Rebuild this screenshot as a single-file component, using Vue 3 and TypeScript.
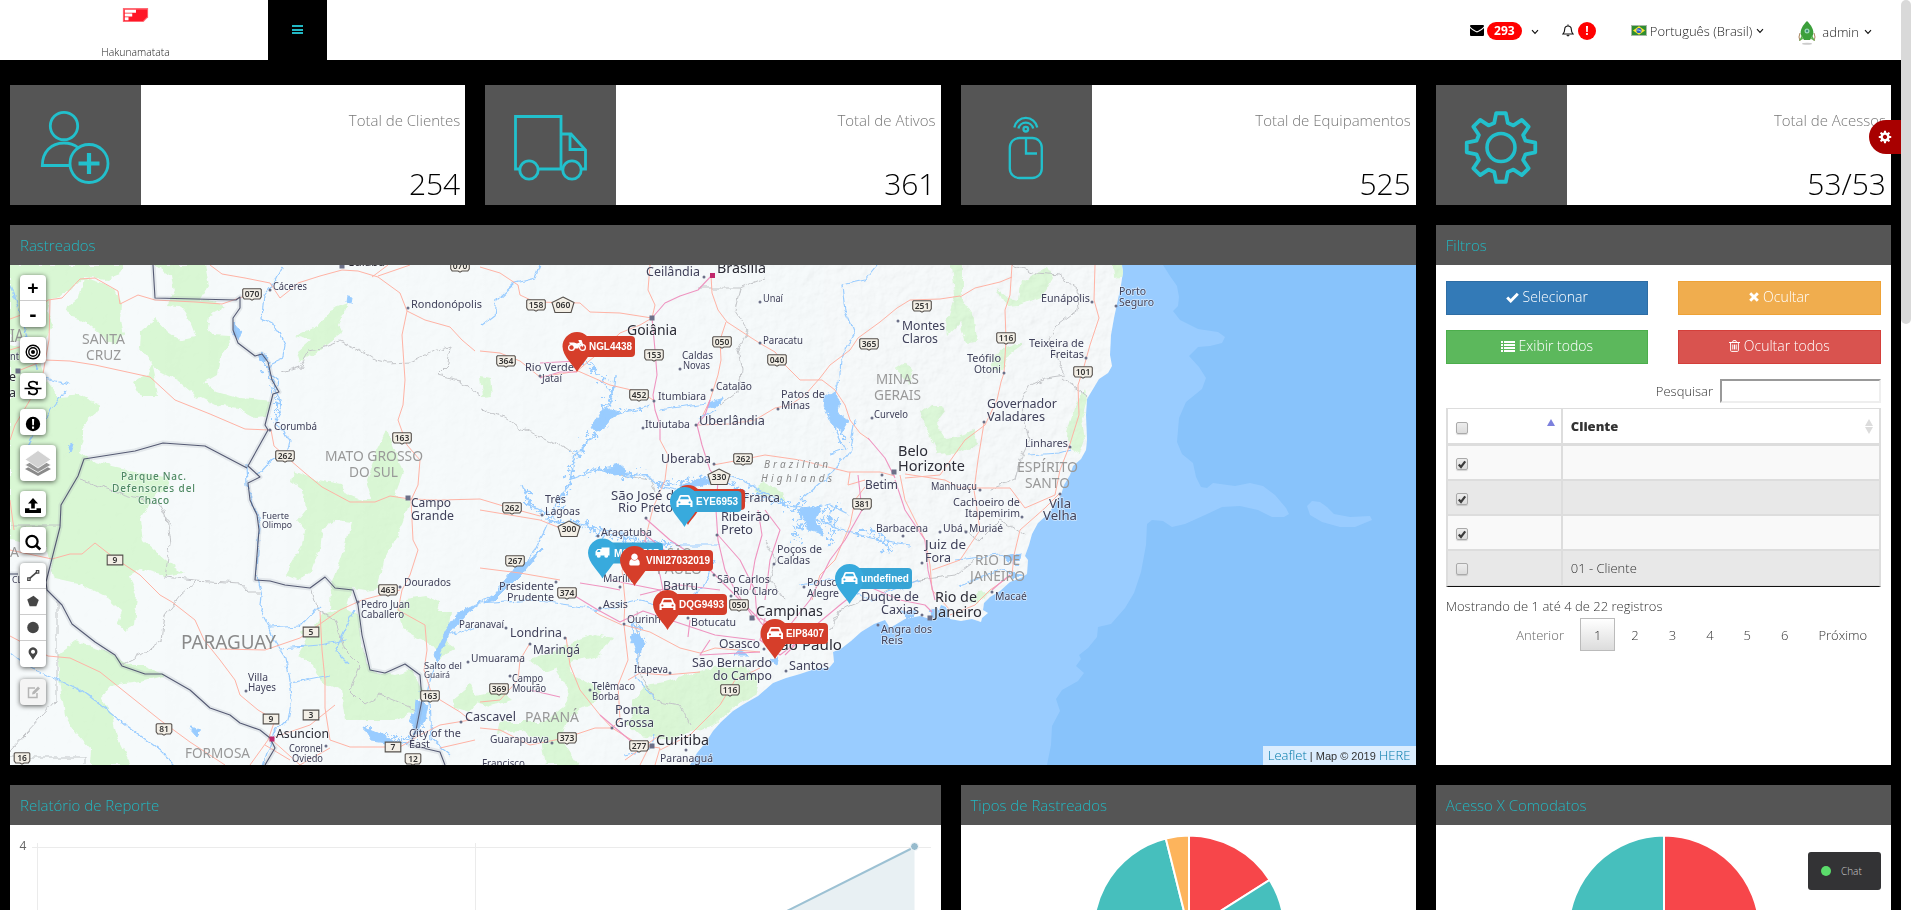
<script setup lang="ts">
interface Card { icon: 'user' | 'truck' | 'mouse' | 'gear'; label: string; value: string }
type Label = [text: string, x: number, y: number, size: number, width: number, kind?: string]
type Shield = [text: string, x: number, y: number, kind?: 'pent' | 'plain']
interface Marker { x: number; top: number; right: number; text: string; tx: number; tw: number; color: 'red' | 'blue'; icon: 'moto' | 'car' | 'truck' | 'user' }

const cards: Card[] = [
  { icon: 'user', label: 'Total de Clientes', value: '254' },
  { icon: 'truck', label: 'Total de Ativos', value: '361' },
  { icon: 'mouse', label: 'Total de Equipamentos', value: '525' },
  { icon: 'gear', label: 'Total de Acessos', value: '53/53' },
]

const rows = [
  { checked: true, name: '' },
  { checked: true, name: '' },
  { checked: true, name: '' },
  { checked: false, name: '01 - Cliente' },
]
const pages = [1, 2, 3, 4, 5, 6]

function gearPath(cx: number, cy: number, outer: number, inner: number, top: number, base: number): string {
  const pts: string[] = []
  for (let i = 0; i < 8; i++) {
    const steps: [number, number][] = [[-base, inner], [-top, outer], [top, outer], [base, inner]]
    for (const [a, r] of steps) {
      const t = ((i * 45 + a - 90) * Math.PI) / 180
      pts.push(`${(cx + r * Math.cos(t)).toFixed(2)},${(cy + r * Math.sin(t)).toFixed(2)}`)
    }
  }
  return 'M' + pts.join('L') + 'Z'
}
const gear = gearPath(65, 62.5, 34.6, 25.4, 8, 15.5)
const cog = gearPath(7, 7, 6.3, 4.6, 9, 14)

const deep = 'M1163,265L1170,276 1177,286 1179,297 1178,306 1173,311 1180,320 1198,329 1218,332 1225,337 1222,343 1210,346 1198,347 1189,356 1199,367 1206,378 1202,389 1186,402 1179,418 1177,442 1182,454 1193,463 1196,477 1201,487 1207,488 1213,483 1235,486 1250,483 1263,486 1275,495 1286,508 1289,514 1284,517 1272,517 1258,510 1240,506 1222,507 1205,515 1185,524 1172,527 1163,521 1152,520 1147,524 1146,545 1141,572 1134,593 1125,608 1111,624 1098,627 1097,637 1088,648 1079,655 1081,659 1076,666 1084,673 1078,681 1062,690 1056,699 1060,711 1052,726 1051,745 1047,765H1416V265Z'
const shoal = 'M1307,506L1312,501 1320,502 1327,507 1334,514 1350,517 1370,516 1372,520 1355,527 1340,527 1322,522 1310,515Z'
const land = 'M10,265H1122L1123,272 1121,285 1118,299 1114,318 1111,335 1110,355 1112,366 1108,373 1099,379 1093,389 1087,399 1086,415 1087,440 1086,450 1081,459 1073,466 1070,475 1064,485 1061,495 1055,504 1048,514 1038,523 1032,534 1029,545 1025,556 1028,560 1027,574 1021,578 1010,582 1000,591 990,597 984,603 983,610 988,613 982,618 981,622 972,619 961,621 950,619 946,607 941,605 936,618 930,619 920,616 905,619 890,628 885,620 874,624 861,632 851,641 842,648 833,652 834,662 829,668 818,668 800,674 786,678 773,683 758,696 744,704 733,711 721,722 713,731 706,742 697,753 690,765H10Z'
const parks = [
  'M10,265H124L121,274 105,280 84,277 72,288 60,297 50,299 46,312 52,325 42,345 10,340Z',
  'M83,278L100,283 116,290 121,305 120,320 123,335 118,345 108,342 98,332 86,322 72,318 65,308 78,298Z',
  'M155,265H205L209,285 200,300 214,301 224,308 210,315 208,328 213,335 228,336 229,345 220,358 217,375 205,382 216,391 240,398 263,400 272,401 267,416 255,417 238,408 215,405 195,395 178,381 160,372 152,366 156,385 158,397 141,397 133,383 146,374 152,362 140,347 141,331 156,319 168,332 182,341 196,338 189,320 180,307 168,306 175,290 172,277Z',
  'M10,345L35,352 46,380 60,397 80,395 100,405 97,412 82,424 84,435 79,452 95,462 130,470 168,478 170,487 152,498 140,520 143,540 165,560 184,573 165,576 140,569 130,575 137,596 134,625 126,630 118,623 122,610 108,598 82,585 55,579 46,548 10,540Z',
  'M297,336L318,325 330,310 348,303 338,325 342,334 320,350 300,362 297,352 311,340Z',
  'M293,471L313,479 340,484 347,494 362,500 372,500 366,480 377,450 387,430 396,452 403,473 395,495 410,500 404,522 393,545 383,560 378,588 366,590 352,588 346,610 330,610 331,585 345,545 352,522 336,520 323,528 320,550 312,572 298,580 285,575 303,545 305,530 297,520 305,510 303,490 291,482Z',
  'M323,615L345,608 359,616 363,650 370,670 395,675 414,670 423,690 412,714 395,720 345,720 341,690 322,682 313,665 298,655 306,640 300,632 315,625Z',
  'M400,600L425,596 440,602 438,612 452,612 448,640 455,650 440,657 428,643 405,630 398,612Z',
  'M57,655L75,641 104,650 130,664 142,664 168,675 140,682 110,686 101,697 112,715 118,740 130,765H91L92,750 76,732 65,715 62,695Z',
  'M530,660L552,652 565,645 596,634 612,638 600,655 570,662 572,675 600,690 596,702 570,715 562,740 578,765H545L541,740 520,730 497,733 500,722 543,722 566,705 569,690 556,668 545,672Z',
  'M632,700L645,685 665,682 710,668 745,666 760,680 755,696 735,706 715,725 690,732 672,740 640,735 626,722 632,715Z',
  'M475,695L500,690 512,700 490,706 475,702Z',
  'M452,700L470,685 478,700 470,712 455,708Z',
  'M920,412L930,404 941,404 945,412 936,424 945,438 960,436 975,430 978,444 960,452 938,454 928,430Z',
  'M952,265H962V300L974,318 976,342 966,343 960,322 948,335 946,322 955,295Z',
  'M997,288L1009,298 1018,300 1020,283 1030,275 1048,267 1054,278 1044,296 1020,305 1005,306Z',
  'M1085,390L1088,400 1082,420 1085,440 1080,454 1070,448 1067,432 1075,405Z',
  'M988,370L1000,350 1022,342 1022,346 1005,358 1003,372Z',
  'M1112,265H1122V277L1113,278Z',
  'M480,376L491,378 493,396 482,397Z',
  'M895,368L905,361 913,372 908,384Z',
  'M755,490L765,483 782,492 784,500 768,497Z',
  'M980,592L990,590 978,602 968,600Z',
]
const roads = [
  'M10,319L35,310 48,300 62,298 80,279 95,278 118,291 120,304 138,295 155,300 195,302 222,304 245,296',
  'M50,300L49,340 45,362 42,380 15,425 10,440',
  'M10,350L42,340M18,371L45,360 70,361 95,365 150,377 175,400 210,414 245,429 270,430',
  'M210,265L222,274 245,278 270,283 280,298 290,290 298,283 320,276 342,270 358,271 378,277 400,293 407,311',
  'M372,277L388,265M378,276L410,265',
  'M407,311L425,320 450,327 462,340 475,351',
  'M407,311L402,335 405,380 403,405 398,420 407,445 420,460 418,485 411,500 413,540 418,550 410,575 402,590 398,610 425,625 427,650 424,670 432,695 460,712 470,720',
  'M271,430L274,446 290,460 305,473 322,487 350,502 375,502 390,496 410,499 440,500 480,499 510,508 540,516',
  'M10,500L14,530M10,550L52,559 70,554 82,554 95,543 113,557 140,575 160,595 172,602 195,620 204,640 220,660 235,680 240,695 258,710 275,720 268,740 250,765',
  'M10,636L48,656 70,658 100,672 160,720 190,742 225,765',
  'M220,649L265,650 300,638 340,610 362,600 400,590M320,612L322,650 325,680 325,708 330,740 350,747 400,747 420,735 440,725 470,720M275,737L310,725 335,705',
  'M272,740L300,765 330,748M265,745L290,760M440,748L475,740',
  'M480,267L500,273 518,285 520,295 535,302 580,303 590,312 620,313 652,318',
  'M652,318L655,305 648,290 650,265M652,318L640,325 620,333 600,352 577,371M480,351L500,353 520,361 540,377 578,371 610,385 640,392 655,401',
  'M660,440L668,455 665,480 653,508 645,540 622,570 625,600 624,622',
  'M711,275L712,293 718,310 727,322 750,337 761,344 775,352 785,365 800,380 822,380 835,390 845,405 850,420 860,433 870,440',
  'M726,322L720,340 721,360 718,375 710,400 703,415M697,425L730,424 755,420 775,408 790,405 805,395 820,378 830,365 850,350 858,338 880,322 897,308 910,300 940,299 960,296',
  'M713,465L740,460 765,455 800,460 848,472 880,472 895,476M850,472L848,485 865,480M905,478L940,475 965,440 985,425 997,400 1001,382 1004,373 1006,340 1005,310 1010,295 1012,265',
  'M960,297L975,288 1000,282 1012,277M1095,265L1094,300 1099,318 1090,345 1083,370 1078,385 1079,415 1069,447 1060,470 1055,495 1025,508 1010,488 960,488 945,480 905,474',
  'M984,423L978,460 974,490 980,530 960,560 932,570M1060,493L1045,508 1020,530 1014,555 1012,575 990,590 975,605 950,615',
  'M865,487L855,500 850,525 835,560 820,575 812,600M900,475L905,500 925,540 930,565 932,590 950,610',
  'M624,625L650,632 680,648 700,653 715,648 760,652M622,625L600,615 595,612M624,625L628,660 618,685 620,720 612,728 640,745 660,748',
  'M566,637L570,665 580,690 600,715 612,728 595,728 565,738 530,745 500,730 480,728M530,643L520,660 518,680 500,700 480,702',
  'M660,750L690,735 720,705 735,680 760,668M628,680L640,673 665,675 700,672M660,748L655,765M640,765L650,745M625,760L660,735',
  'M480,510L540,520 565,530M480,568L520,573 560,580',
]
const highways = [
  'M652,318L665,303 680,296 698,290 712,275M652,318L655,350 657,375 653,395 655,410 660,425 660,440',
  'M710,400L705,415 697,425 702,445 710,470 718,480 716,510 718,540 725,570 735,590 755,620',
  'M540,363L577,361M540,378L560,372 577,372M868,438L885,458 895,478',
  'M565,590L598,610 620,622 643,611 670,620 715,635 755,640M645,540L660,575 665,600M667,620L660,590 610,580',
  'M718,535L740,560 755,590 757,618 780,645M750,590L755,560 762,535 758,510M645,518L670,540 700,560 720,580 760,620M760,618L800,640 780,655 760,640 765,618',
  'M785,655L810,630 840,605 865,585 900,600 925,605 932,612M858,475L862,510 845,540 830,560 810,600 790,625 775,640M710,640L700,655 760,652M620,590L605,587 580,583',
  'M895,480L905,510 925,540 928,570 935,600M1010,575L1000,583 992,590M560,697L530,690M600,715L632,742M670,555L640,530',
  'M765,600L770,560 780,530 765,510M640,595L680,585 720,590M690,620L688,637',
]
const rivers = [
  'M282,265L275,280 264,295 262,318 275,325 285,345 283,358 272,363 268,372 278,380 275,392 280,400 282,412 275,425 285,430 290,440 288,450 270,462 258,475',
  'M246,465L247,485 255,510 260,530 258,550 257,575 262,595 260,610 268,625 275,640 285,655 290,680 292,700 288,720 275,732 268,750 263,765',
  'M540,265L535,278 515,283 497,300 495,315 482,325M877,265L865,280 842,285 845,310 855,335 840,360 838,385 830,400 835,430 845,450 830,455',
  'M650,405L630,412 605,418 590,440 575,455 570,485 560,495 545,530 535,550 515,575 500,590 470,610 445,632 438,660 430,680 425,700 422,725 410,740',
  'M570,480L600,468 625,475 645,475 655,485 675,490 700,480 730,475 760,490 785,505 810,510 830,505 850,515',
  'M545,520L580,525 610,530 640,540 680,545 720,545M480,604L530,600 570,605 600,610 640,600 680,610 700,590 715,560',
  'M10,652L30,668 60,680 80,690 100,705 130,728 160,750 175,765M10,285L20,315 30,345 38,370M70,385L45,378M65,390L30,440 20,470',
  'M270,628L300,626 320,605M280,648L320,645 345,640M290,683L330,675M355,610L340,640 335,650 350,665',
  'M480,625L450,635M1028,455L1060,453 1070,450M955,560L1000,555 1020,565M960,585L1000,570 1020,577M800,510L840,530 880,540 910,545',
  'M615,375L613,395 605,415M700,420L716,410M660,410L705,403M522,485L530,505 548,515M855,420L850,450 835,470 800,500',
  'M623,755L650,750 655,735M430,700L432,740 450,755M630,620L640,650 635,675 655,700M800,585L835,580 870,600 920,580',
]
const reservoirs = [
  'M577,350C582,360 608,380 612,396L603,414 640,408M605,416L592,436 572,462 568,490 552,515',
  'M582,474L600,468 628,476 648,474M655,485L685,482 720,478 745,492 775,500 800,512 840,508',
  'M548,520L580,524 598,532 640,542 672,545M524,488L530,505 546,515',
  'M796,528L835,518 830,545M858,530L880,536 890,550M802,500L795,540',
  'M425,690L422,715 418,735M365,730L395,738 412,742M828,395L836,425 845,440',
  'M262,355L270,375 278,400 276,420M635,620L640,640',
]
const lakes = [
  'M234,322L241,330 237,340 233,335ZM258,353L268,356 265,362 260,360ZM348,296L353,297 352,303 347,302Z',
  'M824,398L833,391 840,400 838,412 849,420 842,432 832,424 826,411 823,406Z',
  'M602,411L612,410 622,414 610,418 600,430 592,428Z',
  'M604,468L620,465 630,473 615,475ZM679,485L700,479 709,485 690,488Z',
  'M708,402L724,397 718,405 706,408Z',
  'M535,555L542,548 520,575 495,600 485,604 510,573ZM480,602L468,612 450,633 438,660 434,655 446,630 460,612Z',
  'M365,728L378,733 390,740 400,748 385,742 372,740ZM415,700L428,705 425,720 416,732 410,722 414,712Z',
  'M630,635L640,633 645,645 637,653ZM68,446L73,443 70,453ZM190,727L200,730 197,735Z',
  'M800,510L822,505 815,520 824,535 808,530ZM1003,556L1021,553 1020,560 1008,562ZM1012,572L1022,574 1014,579Z',
  'M929,612L938,606 942,618 934,618ZM900,611L915,612 908,619Z',
  'M768,660L778,657 776,665ZM740,651L748,655 735,655Z',
]
const stateLines = [
  'M282,373L300,367 310,350 325,347 340,341 360,350 375,360 388,363 410,362 430,353 450,345 448,365 438,375 460,380 480,395',
  'M480,410L505,418 520,428 545,438 565,448 575,455M698,288H740L765,278M740,288L735,310 748,330 738,350 742,370 740,390 720,405',
  'M165,510L170,545 165,577 195,580 240,583 248,592 260,592M196,581L180,595 165,615 162,640 140,655 120,665M80,480L110,490 160,505 170,525',
  'M1012,265L1035,273 1060,275 1078,290 1080,308 1060,323 1048,340 1055,355 1065,375 1045,378 1030,385 1022,400 1023,415 1030,440 1020,460 1015,480 990,490',
  'M1062,378L1088,397M620,475L650,480 655,490M765,540L775,560 770,580 785,600M635,610L640,640 638,670 655,700 680,705 690,725',
  'M57,600V700L10,750M10,757H85V765M10,525H60M312,590L318,610 335,620 345,650 360,665 350,690 365,705 380,695 415,710',
  'M1025,535L1000,520 980,540 965,530M975,560L955,575 920,580 890,590 840,610 830,630 800,640',
]
const borders = [
  'M153,265L155,298 236,300 240,297 240,308 233,318 233,330 238,343 255,356 262,354 268,362 272,380 279,392 273,394 265,425 268,430 248,466 260,477 248,483 250,500 257,515 259,530 255,580 270,581 285,585 310,588 325,577 335,588 353,590 358,605 362,635 370,670 385,673 405,664 420,675 422,700 416,730 410,745 440,752 445,765',
  'M247,468L205,446 163,443 135,451 84,459 78,476 61,505 60,527 46,582 47,590 62,605 72,624 95,642 115,655 122,666 145,674 162,674 190,690 210,708 230,715 240,723 260,730 270,738 275,748 265,765',
  'M10,574H18',
]

const labels: Label[] = [
  ['Cuiabá', 347, 266, 13, 38, 'city'], ['Cáceres', 273, 290, 10.5, 34], ['Rondonópolis', 411, 308, 11, 71], ['SANTA', 82, 344, 15, 43, 'state'], ['CRUZ', 86, 360, 15, 35, 'state'],
  ['Corumbá', 274, 430, 11, 43], ['MATO GROSSO', 325, 461, 15, 98, 'state'], ['DO SUL', 349, 477, 15, 49, 'state'],
  ['Parque Nac.', 121, 480, 10, 65, 'park'], ['Defensores del', 112, 492, 10, 83, 'park'], ['Chaco', 138, 504, 10, 31, 'park'],
  ['Campo', 411, 507, 13, 40], ['Grande', 411, 520, 13, 43], ['Fuerte', 262, 519, 9.5, 27], ['Olimpo', 262, 528, 9.5, 30],
  ['IA', 10, 342, 18, 14, 'state'], ['nt', 10, 360, 10.5, 9], ['e', 9, 381, 13, 7, 'city'], ['a', 9, 397, 13, 7, 'city'], ['A', 10, 557, 14, 9, 'state'], ['CL', 12, 583, 9.5, 10],
  ['PARAGUAY', 181, 649, 19, 95, 'country'], ['Dourados', 404, 586, 11.5, 47], ['Pedro Juan', 361, 608, 10, 49], ['Caballero', 361, 618, 10, 43],
  ['Villa', 248, 681, 10, 20], ['Hayes', 248, 691, 10, 28], ['Salto del', 424, 669, 9.5, 38], ['Guairá', 424, 678, 9.5, 26], ['Asuncion', 276, 738, 13, 53, 'city'],
  ['Coronel', 289, 752, 10, 34], ['Oviedo', 292, 762, 10, 31], ['City of the', 409, 737, 11, 52], ['East', 409, 748, 11, 21], ['FORMOSA', 185, 758, 14, 65, 'state'],
  ['Cascavel', 465, 721, 12.5, 51], ['Paranavaí', 459, 628, 10.5, 45], ['Umuarama', 471, 662, 11, 54],
  ['Ceilândia', 646, 276, 12, 54], ['Brasília', 717, 273, 14.5, 49, 'city'], ['Unaí', 763, 302, 10, 20], ['Goiânia', 627, 335, 15, 50, 'city'],
  ['Rio Verde', 525, 371, 11, 49], ['Jataí', 542, 382, 10.5, 20], ['Caldas', 682, 359, 10, 31], ['Novas', 683, 369, 10, 27], ['Paracatu', 763, 344, 10.5, 40],
  ['Catalão', 716, 390, 11, 36], ['Itumbiara', 658, 400, 11, 48], ['Patos de', 781, 398, 11, 44], ['Minas', 781, 409, 11, 29], ['Uberlândia', 699, 425, 13, 66],
  ['Ituiutaba', 645, 428, 11, 45], ['Uberaba', 661, 463, 12.5, 50], ['Montes', 902, 330, 13, 43], ['Claros', 902, 343, 13, 36], ['MINAS', 876, 384, 15, 43, 'state'], ['GERAIS', 874, 400, 15, 47, 'state'],
  ['Curvelo', 874, 418, 10, 34], ['Brazilian', 764, 468, 10, 64, 'range'], ['Highlands', 761, 482, 10, 71, 'range'], ['Belo', 898, 456, 15, 30, 'city'], ['Horizonte', 898, 471, 15, 67, 'city'],
  ['Betim', 865, 489, 12, 33], ['Manhuaçu', 931, 490, 10.5, 46], ['Três', 545, 503, 11, 21], ['Lagoas', 545, 515, 11, 35], ['São José do', 611, 500, 12.5, 71], ['Rio Preto', 618, 512, 12.5, 55],
  ['Franca', 743, 502, 12, 37], ['Ribeirão', 721, 521, 12.5, 49], ['Preto', 721, 534, 12.5, 32],
  ['Eunápolis', 1041, 302, 11, 49], ['Porto', 1119, 295, 11, 27], ['Seguro', 1119, 306, 11, 35], ['Teixeira de', 1029, 347, 11, 55], ['Freitas', 1050, 358, 11, 34],
  ['Teófilo', 967, 362, 11, 34], ['Otoni', 974, 373, 11, 27], ['Governador', 987, 408, 13, 70], ['Valadares', 987, 421, 13, 58], ['Linhares', 1025, 447, 11, 43],
  ['ESPÍRITO', 1017, 472, 15, 61, 'state'], ['SANTO', 1025, 488, 15, 45, 'state'], ['Cachoeiro de', 953, 506, 11, 67], ['Itapemirim', 965, 517, 11, 55], ['Vila', 1049, 508, 13, 22], ['Velha', 1043, 520, 13, 34],
  ['Araçatuba', 601, 536, 11, 51], ['SÃO', 667, 558, 15, 25, 'state'], ['PAULO', 657, 574, 15, 45, 'state'], ['Marília', 603, 582, 11, 33], ['Presidente', 499, 590, 11, 55], ['Prudente', 507, 601, 11, 47],
  ['Bauru', 663, 590, 13, 35], ['São Carlos', 717, 583, 11, 53], ['Rio Claro', 733, 595, 11, 45], ['Assis', 603, 608, 11, 25], ['Ourinhos', 627, 623, 11, 45], ['Botucatu', 691, 626, 11, 45],
  ['Campinas', 756, 616, 14, 67, 'city'], ['Poços de', 777, 553, 11, 45], ['Caldas', 777, 564, 11, 33], ['Pouso', 807, 586, 11, 31], ['Alegre', 807, 597, 11, 32],
  ['Duque de', 861, 601, 13, 58], ['Caxias', 881, 614, 13, 38], ['Rio de', 935, 602, 14.5, 42, 'city'], ['Janeiro', 934, 617, 14.5, 48, 'city'], ['Angra dos', 881, 633, 11, 51], ['Reis', 881, 644, 11, 22],
  ['Londrina', 510, 637, 13, 52], ['Maringá', 533, 654, 13, 47], ['Osasco', 719, 648, 13, 41], ['São Paulo', 772, 650, 14.5, 70, 'city'], ['São Bernardo', 692, 667, 12.5, 80], ['do Campo', 713, 680, 12.5, 59],
  ['Santos', 789, 670, 12.5, 40], ['Itapeva', 634, 673, 10.5, 34], ['Campo', 512, 682, 10, 31], ['Mourão', 512, 692, 10, 34], ['Telêmaco', 592, 690, 10.5, 43], ['Borba', 592, 700, 10.5, 27],
  ['Ponta', 615, 714, 12.5, 35], ['Grossa', 615, 727, 12.5, 39], ['PARANÁ', 525, 722, 14, 54, 'state'], ['Guarapuava', 490, 743, 11, 59], ['Curitiba', 656, 745, 14.5, 53, 'city'], ['Paranaguá', 660, 762, 11, 53], ['Francisco', 482, 767, 10.5, 43],
  ['Barbacena', 876, 532, 11, 52], ['Ubá', 943, 532, 11, 20], ['Muriaé', 969, 532, 11, 34], ['Juiz de', 925, 549, 12.5, 41], ['Fora', 925, 562, 12.5, 26], ['RIO DE', 975, 565, 15, 45, 'state'], ['JANEIRO', 970, 581, 15, 55, 'state'], ['Macaé', 995, 600, 11, 32],
]
const shields: Shield[] = [
  ['9', 115, 560, 'plain'], ['9', 271, 719, 'plain'], ['5', 311, 632, 'plain'], ['3', 311, 715, 'plain'], ['7', 393, 747, 'plain'], ['81', 164, 729], ['16', 22, 758], ['12', 413, 759], ['163', 430, 696], ['463', 388, 590],
  ['262', 285, 456], ['163', 402, 438], ['070', 252, 294], ['070', 460, 266], ['158', 536, 305], ['060', 563, 305, 'pent'], ['153', 654, 355], ['050', 722, 342], ['364', 506, 361], ['452', 639, 395], ['262', 743, 459],
  ['330', 719, 477, 'pent'], ['040', 777, 360], ['251', 922, 306], ['365', 869, 344], ['381', 862, 504], ['262', 512, 508], ['116', 1006, 338], ['101', 1083, 372], ['300', 569, 529, 'pent'], ['267', 515, 561], ['374', 567, 593],
  ['050', 739, 605], ['116', 730, 690], ['369', 499, 689], ['373', 567, 738], ['277', 639, 746],
]
const dots: [number, number][] = [[270, 290], [408, 308], [270, 430], [400, 587], [358, 602], [246, 691], [326, 746], [704, 277], [760, 302], [540, 376], [760, 343], [680, 369], [712, 390], [654, 401], [778, 409], [696, 425], [643, 428], [714, 464], [898, 321], [872, 418], [882, 475], [980, 490], [542, 515], [646, 518], [717, 535], [598, 536], [556, 582], [620, 587], [714, 575], [731, 596], [600, 608], [624, 624], [688, 618], [774, 564], [804, 587], [1092, 302], [1116, 306], [1086, 358], [1004, 373], [984, 422], [1070, 447], [1022, 517], [1060, 494], [903, 536], [940, 532], [966, 532], [922, 563], [992, 592], [878, 625], [565, 638], [530, 644], [764, 649], [786, 671], [670, 673], [510, 676], [590, 690], [612, 728], [552, 743], [686, 750], [922, 615], [461, 722], [468, 662], [506, 628]]
const squares: [number, number][] = [[342, 266], [652, 318], [894, 472], [752, 618], [930, 618], [652, 746], [408, 498], [18, 371]]

const markers: Marker[] = [
  { x: 577, top: 332, right: 635, text: 'NGL4438', tx: 589, tw: 43, color: 'red', icon: 'moto' },
  { x: 688, top: 485, right: 745, text: '', tx: 0, tw: 0, color: 'red', icon: 'car' },
  { x: 684.5, top: 487, right: 741.5, text: 'EYE6953', tx: 696, tw: 42, color: 'blue', icon: 'car' },
  { x: 602.5, top: 538.5, right: 663, text: 'MSE6587', tx: 614, tw: 45, color: 'blue', icon: 'truck' },
  { x: 634.5, top: 546, right: 713, text: 'VINI27032019', tx: 646, tw: 64, color: 'red', icon: 'user' },
  { x: 667.5, top: 590, right: 727, text: 'DQG9493', tx: 679, tw: 45, color: 'red', icon: 'car' },
  { x: 775, top: 619, right: 828, text: 'EIP8407', tx: 786, tw: 38, color: 'red', icon: 'car' },
  { x: 849.5, top: 564, right: 912, text: 'undefined', tx: 861, tw: 48, color: 'blue', icon: 'car' },
]
const shieldPath = (s: Shield): string => {
  if (s[3] === 'pent') return 'M0,-8L11,-2.5 8,7.5H-8L-11,-2.5Z'
  const w = s[0].length === 3 ? 9.3 : 7.8
  return s[3] === 'plain' ? 'M-7.8,-4.9H7.8V4.9H-7.8Z' : `M-${w},-4.3L-${w - 0.8},-5.2H${w - 0.8}L${w},-4.3V2.8L${w - 1.5},5H2L0,6.2 -2,5H-${w - 1.5}L-${w},2.8Z`
}
</script>

<template>
  <div class="page">
    <div class="main">
      <header class="topbar">
        <div class="brand">
          <svg class="brand-logo" viewBox="0 0 27 15"><path d="M0 0H27V10L22 15H0Z" fill="#ff6b75" /><path d="M1 1.5H26V9.5L21.5 14H1Z" fill="#ff1626" /><path d="M2 2H14V5H2ZM2 6H10V9H2ZM2 10H6V13H2Z" fill="#fff" /></svg>
          <span class="brand-name">Hakunamatata</span>
        </div>
        <div class="menu-toggle"><i></i><i></i><i></i></div>
        <nav class="user-nav">
          <div class="nav-mail">
            <svg width="14" height="11" viewBox="0 0 14 11"><path d="M1 0H13Q14 0 14 1.2C13 3.2 9 5.4 7 6.3C5 5.4 1 3.2 0 1.2Q0 0 1 0ZM0 3C2 5 5 6.6 7 7.5C9 6.6 12 5 14 3V10Q14 11 13 11H1Q0 11 0 10Z" /></svg>
            <span class="badge">293</span>
            <svg class="chev" viewBox="0 0 8 6"><path d="M1 1.2L4 4.4 7 1.2" /></svg>
          </div>
          <div class="nav-bell">
            <svg width="12" height="13" viewBox="0 0 12 13"><path d="M1 10C2.6 8.5 2.6 7.5 2.7 5.2C2.8 3.3 4 2 6 2S9.2 3.3 9.3 5.2C9.4 7.5 9.4 8.5 11 10ZM6 .5V2M4.8 11Q6 12.8 7.2 11" fill="none" stroke="#111" stroke-width="1.1" /></svg>
            <span class="badge round">!</span>
          </div>
          <div class="nav-lang">
            <svg class="flag" width="16" height="11" viewBox="0 0 16 11"><path d="M0 0H16V11H0Z" fill="#a7b9a7" /><path d="M1 1H15V10H1Z" fill="#2f8d32" /><path d="M8 1.3L14 5.5 8 9.7 2 5.5Z" fill="#ffe62e" /><circle cx="8" cy="5.5" r="2.6" fill="#2a5fc4" /><path d="M5.6 5Q8 4.4 10.3 6.4" stroke="#cfe3f7" stroke-width=".8" fill="none" /></svg>
            <span>Português (Brasil)</span>
            <svg class="chev" viewBox="0 0 8 6"><path d="M1 1.2L4 4.4 7 1.2" /></svg>
          </div>
          <div class="nav-user">
            <svg width="18" height="24" viewBox="0 0 18 24"><path d="M2 12Q0 16 2 20M16 12Q18 16 16 20" stroke="#a8835c" fill="none" /><path d="M9 0C13 4 16.5 9 15 14L12 19H6L3 14C1.5 9 5 4 9 0Z" fill="#3c9f3b" /><path d="M4 14L1 20 5 18ZM14 14L17 20 13 18Z" fill="#58b04a" /><circle cx="9" cy="10" r="2.5" fill="#9ad8b5" /><circle cx="9" cy="10" r="1.2" fill="#3d8f77" /><ellipse cx="9" cy="22.8" rx="5" ry="1" fill="#ccc" /></svg>
            <span>admin</span>
            <svg class="chev" viewBox="0 0 8 6"><path d="M1 1.2L4 4.4 7 1.2" /></svg>
          </div>
        </nav>
      </header>

      <section class="cards">
        <article v-for="c in cards" :key="c.label" class="card">
          <div class="card-icon">
            <svg v-if="c.icon === 'user'" viewBox="0 0 131 120"><circle cx="54" cy="41" r="13.7" /><path d="M59.5 80.5H32.3C32.3 67 41 58 54 58Q62 58 68 62.5" /><circle cx="79" cy="78.5" r="19" /><path d="M79 68V89M68.5 78.5H89.5" stroke-width="4.2" /></svg>
            <svg v-else-if="c.icon === 'truck'" viewBox="0 0 131 120"><path d="M34 84H30.5V31.5H76V84M53 84H78M76 49H86L100.5 65V84H96M85 50V64.5H100" /><circle cx="44" cy="85" r="9.2" /><circle cx="87" cy="85" r="9.2" /></svg>
            <svg v-else-if="c.icon === 'mouse'" viewBox="0 0 131 120"><rect x="48.800" y="53" width="32" height="40" rx="9.5" stroke-width="2.300" /><path d="M65 53V68.5H76M57.4 43.5A7.6 7.6 0 0 1 72.2 43.5M53.3 42.5A11.7 11.7 0 0 1 76.3 42.5" stroke-width="2.300" /><circle cx="64.800" cy="44.2" r="2.3" stroke-width="2.300" /></svg>
            <svg v-else viewBox="0 0 131 120"><path :d="gear" stroke-width="3.8" stroke-linejoin="round" /><circle cx="65" cy="62.5" r="14" stroke-width="3.6" /></svg>
          </div>
          <div class="card-body">
            <span class="card-label">{{ c.label }}</span>
            <span class="card-value">{{ c.value }}</span>
          </div>
        </article>
      </section>

      <section class="row mid">
        <article class="panel wide">
          <h3 class="panel-head">Rastreados</h3>
          <div class="map">
            <svg class="map-canvas" width="1406" height="500" viewBox="10 265 1406 500">
              <defs>
                <clipPath id="land-clip"><path :d="land" /></clipPath>
                <filter id="relief" x="0" y="0" width="100%" height="100%">
                  <feTurbulence type="fractalNoise" baseFrequency="0.09" numOctaves="4" seed="4" result="n" />
                  <feDiffuseLighting in="n" surfaceScale="2.4" lighting-color="#ffffff"><feDistantLight azimuth="225" elevation="55" /></feDiffuseLighting>
                </filter>
                <filter id="rough" x="-2%" y="-2%" width="104%" height="104%">
                  <feTurbulence type="fractalNoise" baseFrequency="0.09" numOctaves="3" seed="9" />
                  <feDisplacementMap in="SourceGraphic" scale="7" xChannelSelector="R" yChannelSelector="G" />
                </filter>
                <filter id="jagged" x="-5%" y="-5%" width="110%" height="110%">
                  <feTurbulence type="fractalNoise" baseFrequency="0.2" numOctaves="3" seed="3" />
                  <feDisplacementMap in="SourceGraphic" scale="20" xChannelSelector="R" yChannelSelector="G" />
                </filter>
                <linearGradient id="fade" x1="0" x2="1"><stop offset="0.1" stop-color="#fff" stop-opacity="0.1" /><stop offset="0.45" stop-color="#fff" stop-opacity="0.5" /><stop offset="0.65" stop-color="#fff" /></linearGradient>
                <mask id="relief-mask"><rect x="10" y="265" width="1406" height="500" fill="url(#fade)" /></mask>
              </defs>
              <rect x="10" y="265" width="1406" height="500" fill="#99ccff" />
              <path :d="deep" fill="#88c3fb" />
              <path :d="shoal" fill="#99ccff" />
              <path :d="land" fill="#f6fafb" />
              <g clip-path="url(#land-clip)">
                <g filter="url(#rough)"><path v-for="p in parks" :key="p" :d="p" fill="#d9f7d4" /></g>
                <g mask="url(#relief-mask)"><rect class="hills" x="10" y="265" width="1115" height="500" filter="url(#relief)" /></g>
              </g>
              <g filter="url(#rough)">
                <path v-for="p in stateLines" :key="p" :d="p" class="line state-line" />
                <path v-for="p in rivers" :key="p" :d="p" class="line river" />
                <path v-for="p in lakes" :key="p" :d="p" fill="#99ccff" stroke="#99ccff" />
              </g>
              <g filter="url(#jagged)"><path v-for="p in reservoirs" :key="p" :d="p" class="line reservoir" /></g>
              <path v-for="p in roads" :key="p" :d="p" class="line road" />
              <path v-for="p in highways" :key="p" :d="p" class="line highway" />
              <path v-for="p in borders" :key="'h' + p" :d="p" class="line halo" />
              <path v-for="p in borders" :key="p" :d="p" class="line border" />
              <circle v-for="d in dots" :key="d.join()" :cx="d[0]" :cy="d[1]" r="1.5" fill="#6c7088" />
              <rect v-for="d in squares" :key="d.join()" :x="d[0] - 2.5" :y="d[1] - 2.5" width="5" height="5" fill="#6c7088" />
              <rect x="710" y="273" width="5" height="5" fill="#c0286c" />
              <rect x="269.5" y="736.5" width="5" height="5" fill="#c0286c" />
              <g v-for="(s, i) in shields" :key="i" :transform="`translate(${s[1]} ${s[2]})`">
                <path :d="shieldPath(s)" class="shield" />
                <text y="3.2" class="shield-text">{{ s[0] }}</text>
              </g>
              <text v-for="(l, i) in labels" :key="'l' + i" :x="l[1]" :y="l[2]" :font-size="l[3]" :textLength="l[4]" :lengthAdjust="l[5] === 'range' || l[5] === 'park' ? 'spacing' : 'spacingAndGlyphs'" class="label" :class="l[5]">{{ l[0] }}</text>
              <g v-for="(m, i) in markers" :key="'m' + i" :class="['marker', m.color]">
                <rect :x="m.x" :y="m.top + 4" :width="m.right - m.x" height="21" rx="4" class="tag" />
                <path :transform="`translate(${m.x} ${m.top})`" d="M0,40C-3,34 -14.5,24 -14.5,14.5A14.5,14.5 0 0 1 14.5,14.5C14.5,24 3,34 0,40Z" class="pin" />
                <g :transform="`translate(${m.x} ${m.top + 14})`" class="glyph">
                  <path v-if="m.icon === 'car'" fill-rule="evenodd" d="M-8,6V0.5L-6.5,-1.5 -5,-5.2Q-4.5,-6 -3.5,-6H3.5Q4.5,-6 5,-5.2L6.5,-1.5 8,.5V6H5.8V4H-5.8V6ZM-4.6,-1.7H4.6L3.5,-4.3H-3.5ZM-6.2,1.5A1.1,1.1 0 1 0 -4,1.5 1.1,1.1 0 1 0 -6.2,1.5ZM4,1.5A1.1,1.1 0 1 0 6.2,1.5 1.1,1.1 0 1 0 4,1.5Z" />
                  <g v-else-if="m.icon === 'moto'"><circle cx="-5.5" cy="1.5" r="2.9" fill="none" stroke="#fff" stroke-width="1.3" /><circle cx="5.5" cy="1.5" r="2.9" fill="none" stroke="#fff" stroke-width="1.3" /><path d="M-8,-3.4L-3,-3.6 0,-2.4 2.6,-3.4 1.5,-5V-6H4.5L6.3,-1 5.3,1.5 3.6,-2 1.2,2.6H-2L-4,-1 -7,-1.8Z" /></g>
                  <path v-else-if="m.icon === 'truck'" d="M-1,-5H7V3H5.5A1.8,1.8 0 1 1 2,3H-2A1.8,1.8 0 1 1 -5.5,3H-7V-1L-5,-3.5H-1ZM-5.6,-0.6H-2.3V-2.4H-4.4Z" />
                  <path v-else d="M0,-6.5A3.3,3.3 0 1 1 -0.01,-6.5ZM-3.3,-1Q0,2 3.3,-1Q5.5,.5 5.3,4Q5,5.5 3.5,5.5H-3.5Q-5,5.5 -5.3,4Q-5.5,.5 -3.3,-1Z" />
                </g>
                <text v-if="m.text" :x="m.tx" :y="m.top + 18.2" :textLength="m.tw" lengthAdjust="spacingAndGlyphs" class="tag-text">{{ m.text }}</text>
              </g>
            </svg>
            <div class="tools">
              <div class="tool-group"><b class="sign">+</b><b class="sign minus">-</b></div>
              <div class="tool-group"><span><svg viewBox="0 0 26 26"><g fill="none" stroke="#000" stroke-width="1.4"><circle cx="13" cy="15" r="6.8" /><circle cx="13" cy="15" r="4.2" /></g><circle cx="13" cy="15" r="2" /></svg></span></div>
              <div class="tool-group"><span><svg viewBox="0 0 26 26"><path d="M17 12V8.5M17 11Q16 8.5 13 8.5C7.5 8.5 7.5 13.5 12 14.5L14.5 15.2C19 17 17.5 21.5 13 21.5Q10 21.5 9 19M9 21.5V18" fill="none" stroke="#000" stroke-width="1.7" /><path d="M4.5 14.7H21.5V16.2H4.5Z" /></svg></span></div>
              <div class="tool-group"><span><svg viewBox="0 0 26 26"><circle cx="13" cy="15" r="7.2" /><path d="M12 10H14.2L13.9 16.2H12.3ZM12 17.6H14.1V19.8H12Z" fill="#fff" /></svg></span></div>
              <div class="tool-group layers"><svg viewBox="0 0 36 36"><path d="M18 17L31 24 18 31 5 24Z" fill="#8a8a8a" /><path d="M18 12.5L31 20 18 27.5 5 20Z" fill="#969696" stroke="#fff" stroke-width=".8" /><path d="M18 5.5L31 14.5 18 23 5 14.5Z" fill="#d2d2d2" stroke="#fff" stroke-width=".8" /></svg></div>
              <div class="tool-group"><span><svg viewBox="0 0 26 26"><path d="M13 7L18 12.5H14.8V17.5H11.2V12.5H8ZM5 17.2H9.5V19H16.5V17.2H21V22H5Z" /></svg></span></div>
              <div class="tool-group"><span><svg viewBox="0 0 26 26"><circle cx="12" cy="14.5" r="5.6" fill="none" stroke="#000" stroke-width="2.2" /><path d="M16 18.5L20.3 22.5" stroke="#000" stroke-width="2.6" /></svg></span></div>
              <div class="tool-group draw">
                <span><svg viewBox="0 0 26 26"><path d="M9 16.5L17 9.5" stroke="#444" stroke-width="1.6" /><path d="M7.5 15.5H10V18H7.5ZM16.5 8H19V10.5H16.5Z" fill="#fff" stroke="#444" stroke-width="1.2" /></svg></span>
                <span><svg viewBox="0 0 26 26"><path d="M13.5 7L19 11.5 16.5 18H9.5L7 11Z" fill="#464646" /></svg></span>
                <span><svg viewBox="0 0 26 26"><circle cx="13" cy="13" r="6" fill="#464646" /></svg></span>
                <span><svg viewBox="0 0 26 26"><path d="M13 19.5L9 13.5A4.6 4.6 0 1 1 17 13.5ZM13 9A2.1 2.1 0 1 0 13.01 9Z" fill="#464646" fill-rule="evenodd" /></svg></span>
              </div>
              <div class="tool-group disabled"><span><svg viewBox="0 0 26 26"><path d="M15 9H8.5V18.5H17V14" fill="none" stroke="#b5b5b5" stroke-width="1.5" /><path d="M12 15.5L12.5 13 18 7.5 20 9.5 14.5 15Z" fill="#b5b5b5" /></svg></span></div>
            </div>
            <div class="attribution"><a>Leaflet</a> | Map © 2019 <a>HERE</a></div>
          </div>
        </article>

        <article class="panel">
          <h3 class="panel-head">Filtros</h3>
          <div class="filters">
            <div class="buttons">
              <button class="btn blue"><svg width="13" height="11" viewBox="0 0 13 11"><path d="M1.2 5.5L4.7 9 11.8 1.7" fill="none" stroke="#fff" stroke-width="2.9" /></svg>Selecionar</button>
              <button class="btn orange"><svg width="10" height="10" viewBox="0 0 10 10"><path d="M1.2 1.2L8.8 8.8M8.8 1.2L1.2 8.8" stroke="#fff" stroke-width="2.9" /></svg>Ocultar</button>
              <button class="btn green"><svg width="14" height="11" viewBox="0 0 14 11"><path d="M0 0H2V2H0ZM3 0H14V2H3ZM0 3H2V5H0ZM3 3H14V5H3ZM0 6H2V8H0ZM3 6H14V8H3ZM0 9H2V11H0ZM3 9H14V11H3Z" fill="#fff" /></svg>Exibir todos</button>
              <button class="btn red"><svg width="11" height="12" viewBox="0 0 11 12"><path d="M0 2.5H11M3.5 2.3L4.2 .6H6.8L7.5 2.3M1.6 2.5V10.5Q1.6 11.4 2.6 11.4H8.4Q9.4 11.4 9.4 10.5V2.5M3.8 4.5V9.5M5.5 4.5V9.5M7.2 4.5V9.5" fill="none" stroke="#fff" stroke-width="1" /></svg>Ocultar todos</button>
            </div>
            <label class="search">Pesquisar <input type="text" /></label>
            <div class="grid">
              <div class="tr th">
                <div class="td first"><i class="check"></i><svg class="sort-up" viewBox="0 0 8 7"><path d="M4 0L8 7H0Z" fill="#7c80dd" /></svg></div>
                <div class="td"><strong>Cliente</strong><svg class="sort-both" viewBox="0 0 8 15"><path d="M4 0L8 7H0ZM4 15L8 8H0Z" fill="#dcdcdc" /></svg></div>
              </div>
              <div v-for="(r, i) in rows" :key="i" class="tr">
                <div class="td first"><i class="check"><svg v-if="r.checked" viewBox="0 0 10 10"><path d="M1.8 5.5L4 8 8.2 2.3" fill="none" stroke="#3c3c3c" stroke-width="2.2" /></svg></i></div>
                <div class="td">{{ r.name }}</div>
              </div>
            </div>
            <div class="info">Mostrando de 1 até 4 de 22 registros</div>
            <div class="pager">
              <span class="page-btn muted">Anterior</span>
              <span v-for="p in pages" :key="p" class="page-btn" :class="{ active: p === 1 }">{{ p }}</span>
              <span class="page-btn">Próximo</span>
            </div>
          </div>
        </article>
      </section>

      <section class="row bottom">
        <article class="panel half">
          <h3 class="panel-head">Relatório de Reporte</h3>
          <svg class="chart" width="931" height="85" viewBox="10 825 931 85">
            <path d="M32 847.5H931M37.5 843V910M475.5 843V910" stroke="#ebebeb" />
            <path d="M787 910L914.5 847V910Z" fill="#e8f0f3" />
            <path d="M787 911L914.5 847" stroke="#9cc1d3" stroke-width="2" />
            <circle cx="914.5" cy="846.5" r="4" fill="#97bbcd" stroke="#fff" stroke-width="1" />
            <text x="19.5" y="850" class="tick">4</text>
          </svg>
        </article>
        <article class="panel">
          <h3 class="panel-head">Tipos de Rastreados</h3>
          <svg class="chart" width="455" height="85" viewBox="961 825 455 85">
            <g stroke="#fff" stroke-width="2">
              <path d="M1189 931V835.5A95.5 95.5 0 0 1 1269.600 880Z" fill="#f7464a" />
              <path d="M1189 931L1269.600 880A95.500 95.500 0 1 1 1165.800 838.500Z" fill="#46bfbd" />
              <path d="M1189 931L1165.800 838.500A95.500 95.500 0 0 1 1189 835.500Z" fill="#fdb45c" />
            </g>
          </svg>
        </article>
        <article class="panel">
          <h3 class="panel-head">Acesso X Comodatos</h3>
          <svg class="chart" width="455" height="85" viewBox="1436 825 455 85">
            <g stroke="#fff" stroke-width="2">
              <path d="M1664 931V835.500A95.500 95.500 0 0 1 1664 1026.500Z" fill="#f7464a" />
              <path d="M1664 931V835.500A95.500 95.500 0 0 0 1664 1026.500Z" fill="#46bfbd" />
            </g>
          </svg>
        </article>
      </section>

      <div class="settings-tab"><svg width="14" height="14" viewBox="0 0 14 14"><path :d="cog + 'M7,4.8A2.2,2.2 0 1 0 7.01,4.8Z'" fill="#fff" fill-rule="evenodd" /></svg></div>
      <div class="chat"><i></i>Chat</div>
    </div>
    <div class="scrollbar"><div class="thumb"></div></div>
  </div>
</template>

<style>
html, body { margin: 0; background: #000; }
</style>

<style scoped>
.page { display: flex; width: 1911px; height: 910px; overflow: hidden; background: #000; font-family: "Open Sans", sans-serif; font-weight: 300; color: #333; font-size: 13px; }
.page * { box-sizing: border-box; }
.main { position: relative; width: 1901px; height: 910px; overflow: hidden; }
.scrollbar { width: 10px; background: #fff; }
.thumb { height: 324px; background: #d9d9d9; border-radius: 5px; }
.topbar { display: flex; height: 60px; background: #fff; }
.brand { width: 268px; display: flex; flex-direction: column; align-items: center; padding-top: 8px; }
.brand-logo { width: 27px; height: 15px; margin-left: 3px; }
.brand-name { margin-top: 23px; margin-left: 3px; font-size: 10.4px; line-height: 15px; color: #222; }
.menu-toggle { width: 59px; background: #000; display: flex; flex-direction: column; align-items: center; gap: 1.5px; padding-top: 25px; padding-right: 1px; }
.menu-toggle i { width: 11px; height: 2px; background: #22b8c4; }
.user-nav { margin-left: auto; padding-right: 29px; display: flex; align-items: center; height: 61px; font-size: 13px; color: #222; }
.user-nav > div { display: flex; align-items: center; }
.nav-mail { margin-right: 23px; }
.badge { margin-left: 3px; width: 35px; height: 18px; border-radius: 9px; background: #f00; color: #fff; font-weight: 700; font-size: 12px; line-height: 17px; text-align: center; }
.nav-mail .chev { margin-left: 9px; margin-top: 2px; }
.badge.round { width: 18px; margin-left: 4px; }
.chev { width: 8px; height: 6px; fill: none; stroke: #111; stroke-width: 1.15; }
.nav-lang { margin-left: 35px; }
.flag { margin-right: 3px; }
.nav-lang .chev { margin-left: 4px; }
.nav-user { margin-left: 34px; margin-top: 4px; }
.nav-user span { margin-left: 6px; margin-right: 5px; margin-top: -2px; }
.nav-user .chev { margin-top: -2px; }

.cards { display: flex; padding: 25px 10px 20px; gap: 20px; }
.card { flex: 1; display: flex; height: 120px; background: #fff; }
.card-icon { width: 131px; background: #555; }
.card-icon svg { display: block; width: 131px; height: 120px; fill: none; stroke: #22c0cc; stroke-width: 2.8; }
.card-body { flex: 1; display: flex; flex-direction: column; align-items: flex-end; padding: 25px 5px 0; }
.card-label { font-size: 15px; line-height: 20px; color: #777; }
.card-value { font-size: 30px; line-height: 40px; margin-top: 34px; color: #000; }

.row { display: flex; gap: 20px; padding: 0 10px 20px; }
.panel { width: 455.25px; background: #fff; flex: none; }
.panel.wide { width: 1405.75px; }
.panel.half { width: 930.5px; }
.mid .panel { height: 540px; }
.bottom .panel { height: 140px; }
.panel-head { margin: 0; height: 40px; padding: 0 10px; line-height: 41px; font-size: 15px; font-weight: 300; background: #555; color: #22b8c2; }
.chart { display: block; }
.tick { font-size: 12px; fill: #666; font-weight: 400; }

.map { position: relative; height: 500px; overflow: hidden; }
.map-canvas { display: block; }
.line { fill: none; stroke-linejoin: round; }
.road { stroke: #ffb3a5; stroke-width: 1; }
.highway { stroke: #ef94c0; stroke-width: 1.1; }
.river { stroke: #99ccff; stroke-width: 1.2; }
.reservoir { stroke: #99ccff; stroke-width: 2.6; }
.state-line { stroke: #c3c5c8; stroke-width: 1; }
.border { stroke: #555a73; stroke-width: 1.1; }
.halo { stroke: #8f93a8; stroke-opacity: 0.18; stroke-width: 5; }
.hills { mix-blend-mode: multiply; opacity: 0.12; }
.label { font-family: "Noto Sans", sans-serif; font-weight: 400; fill: #40415a; stroke: #f6fafb; stroke-opacity: 0.6; stroke-width: 1.5; paint-order: stroke; }
.label.city { fill: #2c2c36; }
.label.state, .label.country { fill: #999; stroke: none; }
.label.country { fill: #8a8a8a; }
.label.park { fill: #4f8a63; font-weight: 500; }
.label.range { fill: #888; font-style: italic; }
.shield { fill: #f3efe6; stroke: #55504c; stroke-width: 1.1; }
.shield-text { font-family: "Noto Sans", sans-serif; font-weight: 600; font-size: 8.5px; fill: #333; text-anchor: middle; }
.red .pin { fill: #d63e2a; }
.blue .pin { fill: #38aadd; }
.red .tag { fill: #d33d2a; }
.blue .tag { fill: #37a4d5; }
.glyph { fill: #fff; }
.tag-text { font-family: "Liberation Sans", Arial, sans-serif; font-weight: 700; font-size: 11px; fill: #fff; }
.tools { position: absolute; left: 10px; top: 10px; display: flex; flex-direction: column; align-items: flex-start; gap: 10px; }
.tool-group { width: 26px; background: #fff; border-radius: 4px; box-shadow: 0 1px 5px rgba(0, 0, 0, 0.65); overflow: hidden; }
.tool-group span, .tool-group b { display: block; width: 26px; height: 26px; border-bottom: 1px solid #ccc; }
.tool-group > :last-child { border-bottom: 0; }
.tool-group svg { display: block; width: 26px; height: 26px; }
.sign { font: 700 18px/26px "DejaVu Sans Mono", monospace; text-align: center; color: #000; }
.sign.minus { line-height: 28px; }
.tool-group.layers, .tool-group.layers svg { width: 36px; height: 36px; }
.draw span svg { height: 25px; }
.disabled { margin-top: 2px; background: #f4f4f4; }
.attribution { position: absolute; right: 0; bottom: 0; width: 153px; height: 19px; padding-left: 5px; background: rgba(255, 255, 255, 0.7); font: 11px/19px "Liberation Sans", Arial, sans-serif; color: #333; white-space: nowrap; }
.attribution a { font: 300 13px/19px "Open Sans", sans-serif; color: #0078a8; }

.filters { padding: 16px 10px 0; color: #333; }
.buttons { display: grid; grid-template-columns: 202px 203px; gap: 15px 30px; }
.btn { height: 34px; padding: 0 0 2px; border: 1px solid; border-radius: 0; font: 300 14px/30px "Open Sans", sans-serif; color: #fff; display: flex; align-items: center; justify-content: center; gap: 4px; }
.blue.btn { background: #337ab7; border-color: #2e6da4; }
.orange.btn { background: #f0ad4e; border-color: #eea236; }
.green.btn { background: #5cb85c; border-color: #4cae4c; }
.red.btn { background: #d9534f; border-color: #d43f3a; }
.search { display: flex; justify-content: flex-end; align-items: center; gap: 7px; margin-top: 15px; height: 24px; }
.search input { width: 161px; height: 24px; padding: 0; border: 2px solid; border-color: #999 #eee #eee #999; background: #fff; }
.grid { margin-top: 5px; width: 435px; border: 2px solid #ddd; border-top-width: 1px; border-bottom: 1px solid #111; height: 179px; }
.tr { display: flex; height: 35px; border-bottom: 2px solid #ddd; background: #f9f9f9; }
.tr.th { height: 37px; border-bottom-width: 3px; background: #fff; color: #333; }
.tr:nth-child(odd):not(.th) { background: #e8e8e8; }
.grid .tr:last-child { border-bottom-width: 1px; }
.tr:last-child { height: 35px; }
.td { flex: 1; display: flex; align-items: center; padding: 0 8px; }
.td.first { flex: none; width: 115px; border-right: 2px solid #ddd; }
.td strong { font-weight: 800; font-size: 13px; }
.sort-up { width: 8px; height: 7px; margin-left: auto; margin-top: -7px; margin-right: -2px; }
.sort-both { width: 8px; height: 15px; margin-left: auto; margin-right: -2px; }
.check { width: 12px; height: 12px; border: 1px solid #aaa; border-radius: 2px; background: linear-gradient(#ededed, #dcdcdc); box-shadow: 0 1px 1px rgba(0, 0, 0, 0.15); margin-top: 2px; }
.th .check { margin-top: 4px; }
.check svg { display: block; width: 10px; height: 10px; }
.info { margin-top: 9px; line-height: 20px; }
.pager { display: flex; justify-content: flex-end; gap: 2.4px; margin-top: 2px; }
.page-btn { height: 33px; line-height: 32px; padding: 0 12.8px; border: 1px solid transparent; }
.page-btn.muted { color: #666; }
.page-btn.active { border-color: #bbb; background: linear-gradient(#fff, #dcdcdc); }
.settings-tab { position: absolute; right: 0; top: 120px; width: 32px; height: 34px; border-radius: 17px 0 0 17px; background: #a80000; display: flex; align-items: center; justify-content: center; }
.chat { position: absolute; left: 1808px; top: 852px; width: 73px; height: 38px; border-radius: 3px; background: #333335; color: #ccc; font-size: 10px; display: flex; align-items: center; padding-left: 13px; gap: 10px; }
.chat i { width: 10px; height: 10px; border-radius: 50%; background: #5bdc6b; }
</style>
